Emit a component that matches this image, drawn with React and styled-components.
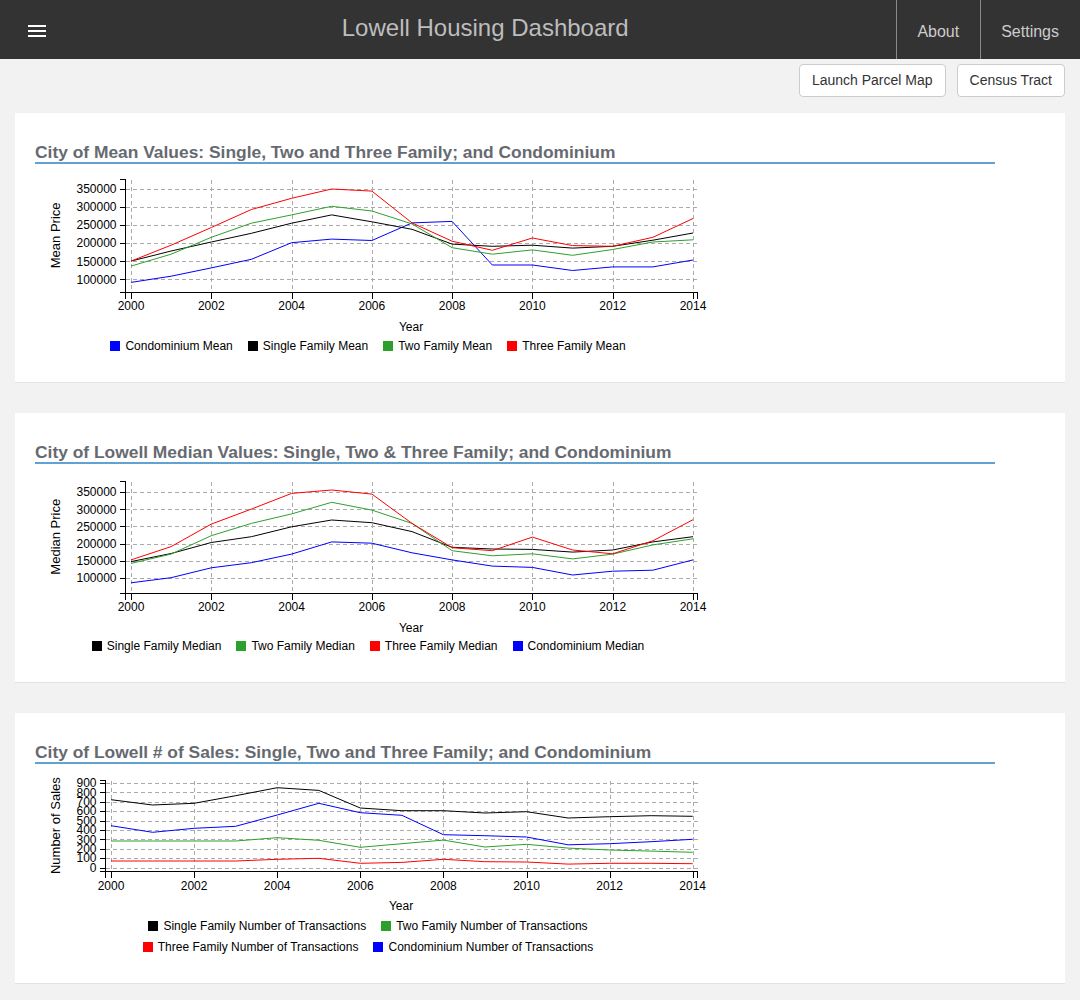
import React from 'react';
import styled, { createGlobalStyle } from 'styled-components';

const GlobalStyle = createGlobalStyle`
  html, body {
    margin: 0;
    padding: 0;
    background: #f2f2f2;
    font-family: "Liberation Sans", Arial, Helvetica, sans-serif;
  }
`;

const Header = styled.header`
  height: 59px;
  background: #333333;
  display: flex;
  align-items: stretch;
`;

const MenuButton = styled.div`
  width: 74px;
  box-sizing: border-box;
  padding: 25px 0 0 28px;
  display: flex;
  flex-direction: column;
  gap: 3px;
`;

const MenuBar = styled.span`
  display: block;
  width: 18px;
  height: 2px;
  background: #ffffff;
`;

const BrandTitle = styled.div`
  flex: 1;
  text-align: center;
  font-size: 24px;
  line-height: 56px;
  color: #bdbdbd;
`;

const Nav = styled.nav`
  display: flex;
`;

const NavItem = styled.div`
  display: flex;
  align-items: center;
  padding: 4px 21px 0 20px;
  border-left: 1px solid #8a8a8a;
  font-size: 16px;
  color: #cccccc;
`;

const Toolbar = styled.div`
  display: flex;
  justify-content: flex-end;
  gap: 11px;
  padding: 5px 15px 0;
`;

const Button = styled.button`
  font-family: inherit;
  font-size: 14px;
  line-height: 19px;
  padding: 6px 12px;
  background: #ffffff;
  color: #333333;
  border: 1px solid #cccccc;
  border-radius: 4px;
`;

const Cards = styled.main`
  display: flex;
  flex-direction: column;
  gap: 31px;
  padding: 16px 15px 20px;
`;

const Card = styled.section`
  background: #ffffff;
  padding: 30px 20px 29px;
  box-shadow: 0 1px 0 #e2e2e2;
`;

const CardTitle = styled.h3`
  margin: 0;
  max-width: 960px;
  font-size: 17.4px;
  line-height: 19px;
  font-weight: bold;
  color: #666a70;
  border-bottom: 2px solid #62a2d3;
`;

const ChartBlock = styled.div`
  width: 666px;
  display: flex;
  flex-direction: column;
`;

const ChartSvg = styled.svg`
  display: block;
  overflow: visible;
  font-family: "Liberation Sans", Arial, Helvetica, sans-serif;
  font-size: 12px;
`;

const GridLine = styled.line`
  stroke: #aaaaaa;
  stroke-width: 1;
  stroke-dasharray: 4 3;
  shape-rendering: crispEdges;
`;

const AxisPath = styled.path`
  fill: none;
  stroke: #000000;
  stroke-width: 1;
  shape-rendering: crispEdges;
`;

const SeriesLine = styled.polyline`
  fill: none;
  stroke: ${(p) => p.$color};
  stroke-width: 1;
`;

const AxisText = styled.text`
  fill: #000000;
  font-size: ${(p) => p.$size || '12px'};
`;

const Legend = styled.div`
  display: flex;
  flex-wrap: wrap;
  justify-content: center;
  column-gap: 15px;
  row-gap: 7px;
  max-width: ${(p) => p.$max || '666px'};
  margin: 1px auto 0;
`;

const LegendItem = styled.div`
  display: flex;
  align-items: center;
  gap: 5px;
  font-size: 12px;
  line-height: 14px;
  color: #000000;
  white-space: nowrap;
`;

const Swatch = styled.span`
  width: 10px;
  height: 10px;
  background: ${(p) => p.$color};
`;

const BLUE = '#0000ff';
const BLACK = '#000000';
const GREEN = '#2ca02c';
const RED = '#ff0000';

const YEARS = Array.from({ length: 15 }, (_, i) => 2000 + i);

const charts = [
  {
    title: 'City of Mean Values: Single, Two and Three Family; and Condominium',
    height: 174,
    axisX: 90,
    x0: 96,
    x1: 658,
    axisEnd: 662,
    top: 15,
    bottom: 127.7,
    min: 66100,
    max: 378600,
    ticks: [100000, 150000, 200000, 250000, 300000, 350000],
    yLabel: 'Mean Price',
    legendMax: '666px',
    series: [
      { name: 'Condominium Mean', color: BLUE, data: [92000, 109000, 132000, 156000, 202000, 212000, 208000, 257000, 261000, 140000, 140000, 125000, 135000, 135000, 154000] },
      { name: 'Single Family Mean', color: BLACK, data: [151000, 179000, 204000, 228000, 256000, 279000, 260000, 239000, 198000, 192000, 195000, 187000, 192000, 209000, 229000] },
      { name: 'Two Family Mean', color: GREEN, data: [137000, 170000, 217000, 256000, 279000, 303000, 290000, 254000, 188000, 170000, 182000, 167000, 183000, 204000, 210000] },
      { name: 'Three Family Mean', color: RED, data: [151000, 195000, 244000, 294000, 325000, 351000, 345000, 257000, 206000, 181000, 215000, 194000, 192000, 217000, 269000] },
    ],
  },
  {
    title: 'City of Lowell Median Values: Single, Two & Three Family; and Condominium',
    height: 174,
    axisX: 90,
    x0: 96,
    x1: 658,
    axisEnd: 662,
    top: 16.7,
    bottom: 128.7,
    min: 56000,
    max: 384200,
    ticks: [100000, 150000, 200000, 250000, 300000, 350000],
    yLabel: 'Median Price',
    legendMax: '666px',
    series: [
      { name: 'Single Family Median', color: BLACK, data: [147000, 171000, 203000, 220000, 249000, 269000, 261000, 235000, 189000, 184000, 183000, 175000, 181000, 205000, 220000] },
      { name: 'Two Family Median', color: GREEN, data: [142000, 169000, 223000, 259000, 287000, 321000, 298000, 259000, 179000, 164000, 170000, 155000, 169000, 196000, 214000] },
      { name: 'Three Family Median', color: RED, data: [152000, 191000, 257000, 301000, 347000, 357000, 345000, 259000, 188000, 179000, 219000, 181000, 170000, 208000, 270000] },
      { name: 'Condominium Median', color: BLUE, data: [85000, 100000, 129000, 144000, 169000, 205000, 201000, 173000, 152000, 134000, 130000, 108000, 119000, 122000, 152000] },
    ],
  },
  {
    title: 'City of Lowell # of Sales: Single, Two and Three Family; and Condominium',
    height: 154,
    axisX: 70,
    x0: 76,
    x1: 657.7,
    axisEnd: 662,
    top: 16,
    bottom: 107.3,
    min: -38,
    max: 932,
    ticks: [0, 100, 200, 300, 400, 500, 600, 700, 800, 900],
    yLabel: 'Number of Sales',
    legendMax: '480px',
    series: [
      { name: 'Single Family Number of Transactions', color: BLACK, data: [723, 666, 684, 765, 850, 822, 634, 606, 606, 581, 595, 528, 542, 553, 546] },
      { name: 'Two Family Number of Transactions', color: GREEN, data: [284, 284, 284, 284, 319, 291, 217, 255, 294, 220, 249, 209, 188, 177, 164] },
      { name: 'Three Family Number of Transactions', color: RED, data: [71, 71, 71, 71, 89, 100, 47, 57, 89, 64, 61, 39, 47, 47, 43] },
      { name: 'Condominium Number of Transactions', color: BLUE, data: [446, 376, 419, 440, 560, 684, 585, 557, 351, 340, 326, 244, 255, 276, 302] },
    ],
  },
];

function LineChart({ cfg }) {
  const { height, axisX, x0, x1, axisEnd, top, bottom, min, max, ticks, series, yLabel } = cfg;
  const xAt = (i) => x0 + ((x1 - x0) * i) / 14;
  const yAt = (v) => top + ((max - v) / (max - min)) * (bottom - top);
  const ax = Math.round(axisX) + 0.5;
  const ab = Math.round(bottom) + 0.5;
  const at = Math.round(top) + 0.5;
  const ae = Math.round(axisEnd) + 0.5;
  const evenYears = YEARS.map((y, i) => ({ y, i })).filter((d) => d.i % 2 === 0);

  return (
    <ChartSvg width={666} height={height}>
      {evenYears.map(({ y, i }) => (
        <GridLine key={'v' + y} x1={Math.round(xAt(i)) + 0.5} x2={Math.round(xAt(i)) + 0.5} y1={at} y2={ab} />
      ))}
      {ticks.map((t) => (
        <GridLine key={'h' + t} x1={ax} x2={ae} y1={Math.round(yAt(t)) + 0.5} y2={Math.round(yAt(t)) + 0.5} />
      ))}
      {series.map((s) => (
        <SeriesLine
          key={s.name}
          $color={s.color}
          points={s.data.map((v, i) => `${xAt(i).toFixed(1)},${yAt(v).toFixed(1)}`).join(' ')}
        />
      ))}
      <AxisPath d={`M${ax - 6},${at}H${ax}V${ab}H${ax - 6}`} />
      {ticks.map((t) => (
        <g key={'yt' + t}>
          <AxisPath d={`M${ax - 6},${Math.round(yAt(t)) + 0.5}H${ax}`} />
          <AxisText x={ax - 9} y={yAt(t)} dy="0.34em" textAnchor="end">
            {t}
          </AxisText>
        </g>
      ))}
      <AxisPath d={`M${ax},${ab + 6}V${ab}H${ae}V${ab + 6}`} />
      {evenYears.map(({ y, i }) => (
        <g key={'xt' + y}>
          <AxisPath d={`M${Math.round(xAt(i)) + 0.5},${ab}V${ab + 6}`} />
          <AxisText x={xAt(i)} y={bottom + 18.5} textAnchor="middle">
            {y}
          </AxisText>
        </g>
      ))}
      <AxisText x={(axisX + axisEnd) / 2} y={bottom + 39} textAnchor="middle">
        Year
      </AxisText>
      <AxisText
        $size="13px"
        transform={`translate(25, ${(top + bottom) / 2}) rotate(-90)`}
        textAnchor="middle"
      >
        {yLabel}
      </AxisText>
    </ChartSvg>
  );
}

function ChartCard({ cfg }) {
  return (
    <Card>
      <CardTitle>{cfg.title}</CardTitle>
      <ChartBlock>
        <LineChart cfg={cfg} />
        <Legend $max={cfg.legendMax}>
          {cfg.series.map((s) => (
            <LegendItem key={s.name}>
              <Swatch $color={s.color} />
              {s.name}
            </LegendItem>
          ))}
        </Legend>
      </ChartBlock>
    </Card>
  );
}

export default function App() {
  return (
    <>
      <GlobalStyle />
      <Header>
        <MenuButton>
          <MenuBar />
          <MenuBar />
          <MenuBar />
        </MenuButton>
        <BrandTitle>Lowell Housing Dashboard</BrandTitle>
        <Nav>
          <NavItem>About</NavItem>
          <NavItem>Settings</NavItem>
        </Nav>
      </Header>
      <Toolbar>
        <Button>Launch Parcel Map</Button>
        <Button>Census Tract</Button>
      </Toolbar>
      <Cards>
        {charts.map((c) => (
          <ChartCard key={c.title} cfg={c} />
        ))}
      </Cards>
    </>
  );
}
